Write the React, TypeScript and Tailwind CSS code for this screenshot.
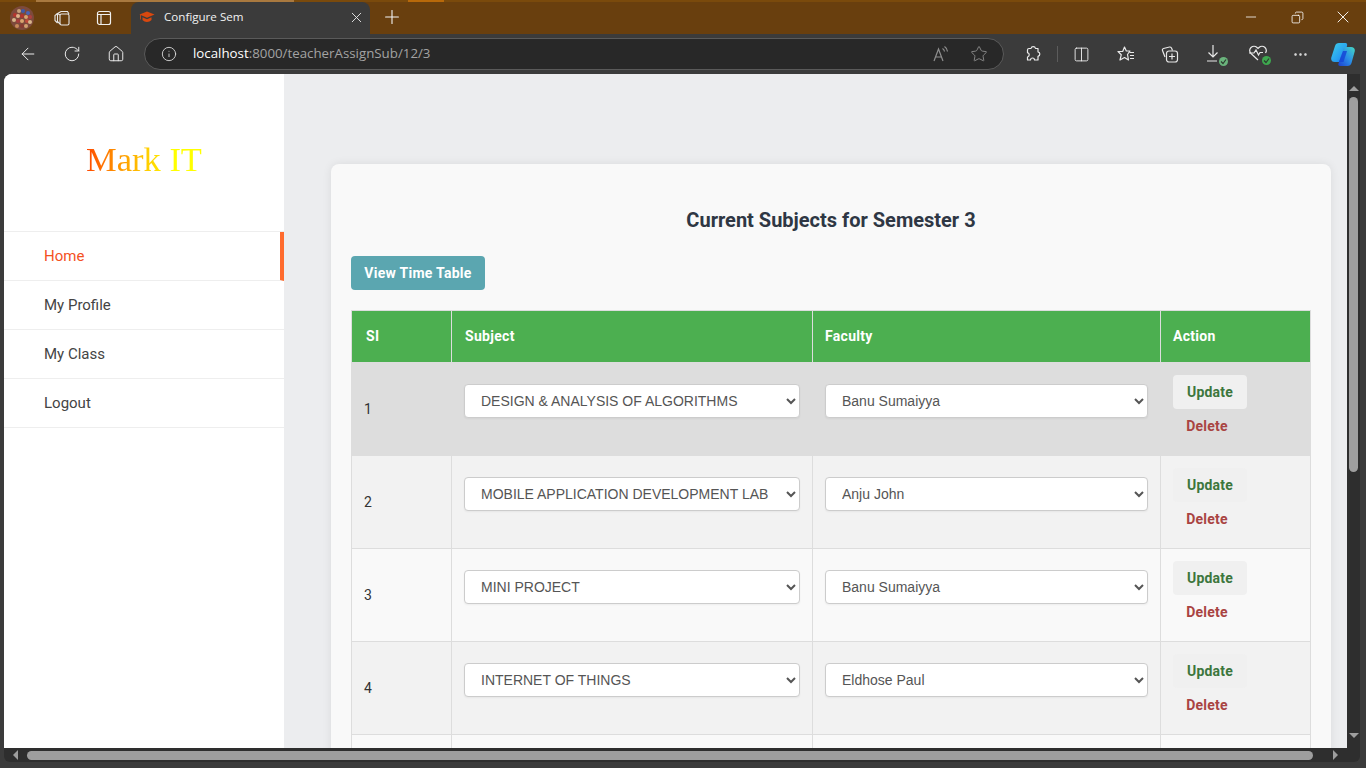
import {
  ArrowLeft,
  RotateCw,
  Home,
  Info,
  Star,
  Columns2,
  MoreHorizontal,
  Plus,
  X,
  Minus,
  Copy,
} from "lucide-react";

const MENU = ["Home", "My Profile", "My Class", "Logout"];

const ROWS = [
  { id: 1, subject: "DESIGN & ANALYSIS OF ALGORITHMS", faculty: "Banu Sumaiyya" },
  { id: 2, subject: "MOBILE APPLICATION DEVELOPMENT LAB", faculty: "Anju John" },
  { id: 3, subject: "MINI PROJECT", faculty: "Banu Sumaiyya" },
  { id: 4, subject: "INTERNET OF THINGS", faculty: "Eldhose Paul" },
];

// group photo thumbnail, just blobs of colour
const AVATAR_DOTS = [
  [5, 9, "#b5352f"], [9, 5, "#c9a07a"], [13, 5, "#3f5aa8"], [18, 7, "#4a64b5"],
  [20, 11, "#b04040"], [4, 14, "#d8b58a"], [8, 10, "#e0b088"], [12, 10, "#b5352f"],
  [16, 11, "#d9a56f"], [8, 15, "#a83c3c"], [12, 15, "#d9a56f"], [17, 15, "#c04a3a"],
  [20, 16, "#d8b58a"], [7, 20, "#c98a5a"], [12, 20, "#8a3a30"], [16, 20, "#d0a070"],
] as const;

function Avatar() {
  return (
    <svg width="24" height="24" viewBox="0 0 24 24" className="shrink-0">
      <circle cx="12" cy="12" r="12" fill="#7d4a3c" />
      {AVATAR_DOTS.map(([cx, cy, fill]) => (
        <circle key={`${cx}-${cy}`} cx={cx} cy={cy} r="2" fill={fill} />
      ))}
    </svg>
  );
}

function TabsIcon() {
  return (
    <svg width="18" height="18" viewBox="0 0 18 18" fill="none" stroke="#e8e8e8" strokeWidth="1.1">
      <rect x="7" y="5" width="9" height="11" rx="1.500" />
      <path d="M7 6 4.500 4.500 8 2.500h6.500L16 5" />
      <path d="M4.500 4.500v8L7 15M4.500 4.500 2 6.500v5L4.500 14" />
    </svg>
  );
}

function VerticalTabIcon() {
  return (
    <svg width="16" height="16" viewBox="0 0 16 16" fill="none" stroke="#f0f0f0" strokeWidth="1.2">
      <rect x="1.500" y="1.500" width="13" height="13" rx="2" />
      <path d="M1.500 4.500h13M5 4.500v10" />
    </svg>
  );
}

function CapIcon() {
  return (
    <svg width="16" height="12" viewBox="0 0 16 12" fill="#d9480f">
      <path d="M8 .5 15.500 3.500 8 6.800.5 3.500Z" />
      <path d="M3.500 6.200 8 8.200l4.500-2V9c-1.200 1.300-2.800 2-4.500 2s-3.300-.7-4.500-2Z" />
      <path d="M1 4h.8v4.500H1Z" />
    </svg>
  );
}

function PuzzleIcon() {
  return (
    <svg width="18" height="18" viewBox="0 0 18 18" fill="none" stroke="#ececec" strokeWidth="1.200" strokeLinejoin="round">
      <path d="M7 3.500a2.300 2.300 0 0 1 4.500 0H14v3.300a2.300 2.300 0 0 1 0 4.500v3.700H10.500a2 2 0 0 0-4 0H3.500V12a2.200 2.200 0 0 0 0-4.300V5c0-.9.600-1.500 1.500-1.500Z" />
    </svg>
  );
}

function ReadAloudIcon() {
  return (
    <svg width="18" height="18" viewBox="0 0 18 18" fill="none" stroke="#8f8f8f" strokeWidth="1.2">
      <path d="M2 16 6.500 4 11 16M3.500 12h6" />
      <path d="M10.500 3.500a4 4 0 0 1 2 3M12.500 1.500a6.500 6.500 0 0 1 3 5" />
    </svg>
  );
}

function FavoritesIcon() {
  return (
    <svg width="18" height="18" viewBox="0 0 18 18" fill="none" stroke="#e8e8e8" strokeWidth="1.200">
      <path d="M7.500 2 9.300 6H13L10.500 9.500 11.500 15 7.500 12.500 3 15 4.300 9.700 1 6.500H5.700Z" strokeLinejoin="round" />
      <path d="M12.500 7.500h4.500M13 10.500h4M13 13.500h4" />
    </svg>
  );
}

function CollectionsIcon() {
  return (
    <svg width="18" height="18" viewBox="0 0 18 18" fill="none" stroke="#e8e8e8" strokeWidth="1.200">
      <path d="M4 12 1.500 5.500a1.500 1.500 0 0 1 1-2l6-1.500a2 2 0 0 1 2 1l1 2.500" />
      <rect x="5.500" y="6" width="11" height="11" rx="2.500" />
      <path d="M11 8.500v6M8 11.500h6" />
    </svg>
  );
}

function StatusBadge({ className }: { className: string }) {
  return (
    <span className={"flex items-center justify-center w-[9px] h-[9px] rounded-full " + className}>
      <svg width="7" height="7" viewBox="0 0 7 7" fill="none" stroke="#2d3b2f" strokeWidth="1.200">
        <path d="M1 3.500 3 5.500 6 1.500" />
      </svg>
    </span>
  );
}

function DownloadsIcon() {
  return (
    <div className="relative w-[20px] h-[20px]">
      <svg width="18" height="20" viewBox="0 0 18 20" fill="none" stroke="#e8e8e8" strokeWidth="1.200">
        <path d="M8 1v12M3.500 8.500 8 13l4.500-4.500M2 17h10" />
      </svg>
      <StatusBadge className="absolute right-[-3px] bottom-[-2px] bg-[#6ab47c]" />
    </div>
  );
}

function HealthIcon() {
  return (
    <div className="relative w-[20px] h-[20px]">
      <svg width="20" height="18" viewBox="0 0 20 18" fill="none" stroke="#e8e8e8" strokeWidth="1.200">
        <path d="M10 16 3 9.500a4.500 4.500 0 0 1 0-6 4.300 4.300 0 0 1 6 0l1 1 1-1a4.300 4.300 0 0 1 6 0 4.500 4.500 0 0 1 .5 5.500" />
        <path d="M1 9h5l2-3 2.500 5 1.500-2.500h3" />
      </svg>
      <StatusBadge className="absolute right-[-3px] bottom-[-1px] bg-[#3ea84f]" />
    </div>
  );
}

function CopilotLogo() {
  return (
    <svg width="24" height="23" viewBox="0 0 24 23">
      <defs>
        <linearGradient id="copA" x1="0" y1="0" x2="1" y2="1">
          <stop offset="0" stopColor="#3fd0e8" />
          <stop offset="0.6" stopColor="#28a0f0" />
          <stop offset="1" stopColor="#1a6fdc" />
        </linearGradient>
        <linearGradient id="copB" x1="0" y1="1" x2="1" y2="0">
          <stop offset="0" stopColor="#1d3fcf" />
          <stop offset="0.5" stopColor="#2a8fe8" />
          <stop offset="1" stopColor="#45d8c0" />
        </linearGradient>
      </defs>
      <path d="M8 0h6c2 0 2.500 1 2 3l-4 14c-.5 1.500-1.500 2-3 2H4c-3 0-4.300-2-3.700-4.500L4 3c.5-2 2-3 4-3Z" fill="url(#copA)" />
      <path d="M15 4h5c3 0 4.300 2 3.700 4.500L20.500 20c-.5 2-2 3-4 3H9c-1.500 0-2-1-1.500-2.500L12 7c.5-2 1.500-3 3-3Z" fill="url(#copB)" />
      <path d="M12 8h4l-3.500 11H8Z" fill="#1546d6" opacity="0.85" />
    </svg>
  );
}

function TitleBar() {
  return (
    <div className="shrink-0">
      <div className="h-[2px] bg-[#7a4a0c] flex">
        <div className="ml-[36px] w-[258px] bg-[#a9793f]" />
        <div className="ml-[114px] w-[36px] bg-[#b8690a]" />
      </div>
      <div className="h-[32px] bg-[#693f0e] flex items-end">
        <div className="flex items-center h-[32px] pl-[10px] w-[131px] shrink-0">
          <Avatar />
          <div className="ml-[19px]">
            <TabsIcon />
          </div>
          <div className="ml-[25px]">
            <VerticalTabIcon />
          </div>
        </div>
        <div className="w-[239px] h-[32px] pb-[2px] bg-[#3b3b3b] rounded-t-[8px] flex items-center pl-[8px] pr-[5px] font-['Open_Sans',sans-serif] text-[11.6px] text-[#f2f2f2]">
          <CapIcon />
          <span className="ml-[9px] flex-1">Configure Sem</span>
          <X size={17} color="#e8e8e8" strokeWidth={1.300} />
        </div>
        <div className="h-[32px] pb-[2px] flex items-center ml-[11px]">
          <Plus size={22} color="#f5f5f5" strokeWidth={1.200} />
        </div>
        <div className="ml-auto h-[32px] pb-[2px] flex items-center text-white">
          <div className="w-[46px] flex justify-center">
            <Minus size={16} strokeWidth={1.200} />
          </div>
          <div className="w-[46px] flex justify-center">
            <Copy size={13} strokeWidth={1.500} className="scale-x-[-1]" />
          </div>
          <div className="w-[46px] flex justify-center">
            <X size={20} strokeWidth={1.100} />
          </div>
        </div>
      </div>
    </div>
  );
}

function Toolbar() {
  return (
    <div className="h-[40px] bg-[#3b3b3b] flex items-center shrink-0 pl-[18px] text-[#ececec]">
      <ArrowLeft size={20} strokeWidth={1.200} />
      <RotateCw size={18} strokeWidth={1.300} className="ml-[25px]" />
      <Home size={18} strokeWidth={1.300} className="ml-[26px]" />
      <div className="ml-[19px] w-[860px] h-[32px] rounded-full bg-[#282828] border border-[#5a5a5a] flex items-center pl-[16px] pr-[15px] font-['Open_Sans',sans-serif] text-[13.3px]">
        <Info size={16} strokeWidth={1.300} color="#e0e0e0" />
        <span className="ml-[16px] text-white">localhost</span>
        <span className="text-[#a3a3a3]">:8000/teacherAssignSub/12/3</span>
        <div className="ml-auto flex items-center gap-[20px]">
          <ReadAloudIcon />
          <Star size={18} strokeWidth={1.200} color="#8f8f8f" />
        </div>
      </div>
      <div className="ml-[20px]"><PuzzleIcon /></div>
      <div className="w-px h-[16px] bg-[#5c5c5c] ml-[15px]" />
      <Columns2 size={17} strokeWidth={1.300} className="ml-[15px]" />
      <div className="ml-[27px]"><FavoritesIcon /></div>
      <div className="ml-[26px]"><CollectionsIcon /></div>
      <div className="ml-[26px]"><DownloadsIcon /></div>
      <div className="ml-[23px]"><HealthIcon /></div>
      <MoreHorizontal size={17} strokeWidth={1.500} className="ml-[24px]" />
      <div className="ml-[22px]"><CopilotLogo /></div>
    </div>
  );
}

function Sidebar() {
  return (
    <aside className="w-[280px] bg-white shrink-0 h-full">
      <div className="h-[157px] flex justify-center pt-[65px]">
        <span className="h-[40px] font-['Liberation_Serif',serif] text-[34.5px] leading-[40px] bg-linear-to-r from-[#ff4500] to-[#ffff00] to-75% bg-clip-text text-transparent">
          Mark IT
        </span>
      </div>
      <ul className="border-t border-[#eeeeee]">
        {MENU.map((item, i) => (
          <li
            key={item}
            className={
              "h-[49px] border-b border-[#eeeeee] pl-[40px] flex items-center text-[15px] " +
              (i === 0 ? "text-[#f4511e] border-r-4 border-r-[#ff6b2e]" : "text-[#444444]")
            }
          >
            {item}
          </li>
        ))}
      </ul>
    </aside>
  );
}

function SubjectsTable() {
  return (
    <table className="w-[960px] table-fixed border-collapse text-[14px] text-[#333333]">
      <thead>
        <tr className="h-[52px] bg-[#4caf50] text-white text-left tracking-[0.3px]">
          <th className="w-[100px] border border-[#dddddd] px-[14px] font-bold">SI</th>
          <th className="w-[361px] border border-[#dddddd] px-[13px] font-bold">Subject</th>
          <th className="w-[348px] border border-[#dddddd] px-[12px] font-bold">Faculty</th>
          <th className="w-[150px] border border-[#dddddd] px-[12px] font-bold">Action</th>
        </tr>
      </thead>
      <tbody>
        {ROWS.map((row, i) => (
          <tr
            key={row.id}
            className={
              "h-[93px] " + (i === 0 ? "bg-[#dddddd]" : i % 2 === 1 ? "bg-[#f2f2f2]" : "bg-[#f9f9f9]")
            }
          >
            <td className="border border-[#dddddd] px-[12px] align-middle">{row.id}</td>
            <td className="border border-[#dddddd] pl-[12px] pr-[12px] align-top pt-[21px]">
              <select className="w-[336px] h-[34px] bg-white border border-[#cccccc] rounded-[4px] pl-[12px] font-['Liberation_Sans',sans-serif] text-[14px] text-[#555555] shadow-[0_1px_2px_rgba(0,0,0,0.05)]">
                <option>{row.subject}</option>
              </select>
            </td>
            <td className="border border-[#dddddd] pl-[12px] pr-[12px] align-top pt-[21px]">
              <select className="w-[323px] h-[34px] bg-white border border-[#cccccc] rounded-[4px] pl-[12px] font-['Liberation_Sans',sans-serif] text-[14px] text-[#555555] shadow-[0_1px_2px_rgba(0,0,0,0.05)]">
                <option>{row.faculty}</option>
              </select>
            </td>
            <td className="border border-[#dddddd] pl-[12px] align-top pt-[12px] tracking-[0.2px]">
              <button className="block w-[74px] h-[34px] rounded-[4px] bg-[#f0f0f0] font-bold text-[14px] text-[#3c763d]">
                Update
              </button>
              <button className="block w-[68px] h-[34px] font-bold text-[14px] text-[#a94442]">
                Delete
              </button>
            </td>
          </tr>
        ))}
        <tr className="h-[40px] bg-[#f9f9f9]">
          <td className="border border-[#dddddd]" />
          <td className="border border-[#dddddd]" />
          <td className="border border-[#dddddd]" />
          <td className="border border-[#dddddd]" />
        </tr>
      </tbody>
    </table>
  );
}

function VerticalScrollbar() {
  return (
    <div className="w-[13px] bg-[#2e2e2e] h-full flex flex-col items-center shrink-0 pt-[12px] relative">
      <div className="w-0 h-0 border-x-[5px] border-x-transparent border-b-[5px] border-b-[#9e9e9e] shrink-0" />
      <div className="w-[9px] h-[375px] mt-[6px] bg-[#9e9e9e] rounded-full shrink-0" />
      <div className="absolute bottom-[10px] w-0 h-0 border-x-[5px] border-x-transparent border-t-[5px] border-t-[#9e9e9e]" />
    </div>
  );
}

function HorizontalScrollbar() {
  return (
    <div className="h-[14px] bg-[#2e2e2e] flex items-center shrink-0 pl-[9px] pr-[22px] rounded-b-[6px]">
      <div className="w-0 h-0 border-y-[5px] border-y-transparent border-r-[5px] border-r-[#9e9e9e] shrink-0" />
      <div className="h-[9px] w-[1286px] ml-[9px] bg-[#9e9e9e] rounded-full" />
      <div className="ml-auto w-0 h-0 border-y-[5px] border-y-transparent border-l-[5px] border-l-[#9e9e9e]" />
    </div>
  );
}

export default function App() {
  return (
    <div className="h-screen w-full overflow-hidden bg-[#2e2e2e] flex flex-col font-['Roboto',sans-serif]">
      <TitleBar />
      <Toolbar />
      <div className="flex-1 min-h-0 bg-[#3b3b3b] pl-[4px] pr-[6px] pb-[6px] flex flex-col">
        <div className="flex-1 min-h-0 flex rounded-tl-[8px] overflow-hidden">
          <div className="flex-1 min-w-0 flex bg-[#ecedef] overflow-hidden">
            <Sidebar />
            <main className="flex-1 min-w-0 pl-[47px] pt-[90px]">
              <div className="w-[1000px] bg-[#f9f9f9] rounded-t-[8px] shadow-[0_0_10px_rgba(0,0,0,0.08)] px-[20px] pt-[43px]">
                <h2 className="text-center text-[20px] leading-[26px] font-bold text-[#2f3744]">
                  Current Subjects for Semester 3
                </h2>
                <button className="block mt-[23px] h-[34px] w-[134px] rounded-[4px] bg-[#5ba6b0] text-white font-bold text-[14px] tracking-[0.27px]">
                  View Time Table
                </button>
                <div className="mt-[20px]">
                  <SubjectsTable />
                </div>
              </div>
            </main>
          </div>
          <VerticalScrollbar />
        </div>
        <HorizontalScrollbar />
      </div>
    </div>
  );
}
